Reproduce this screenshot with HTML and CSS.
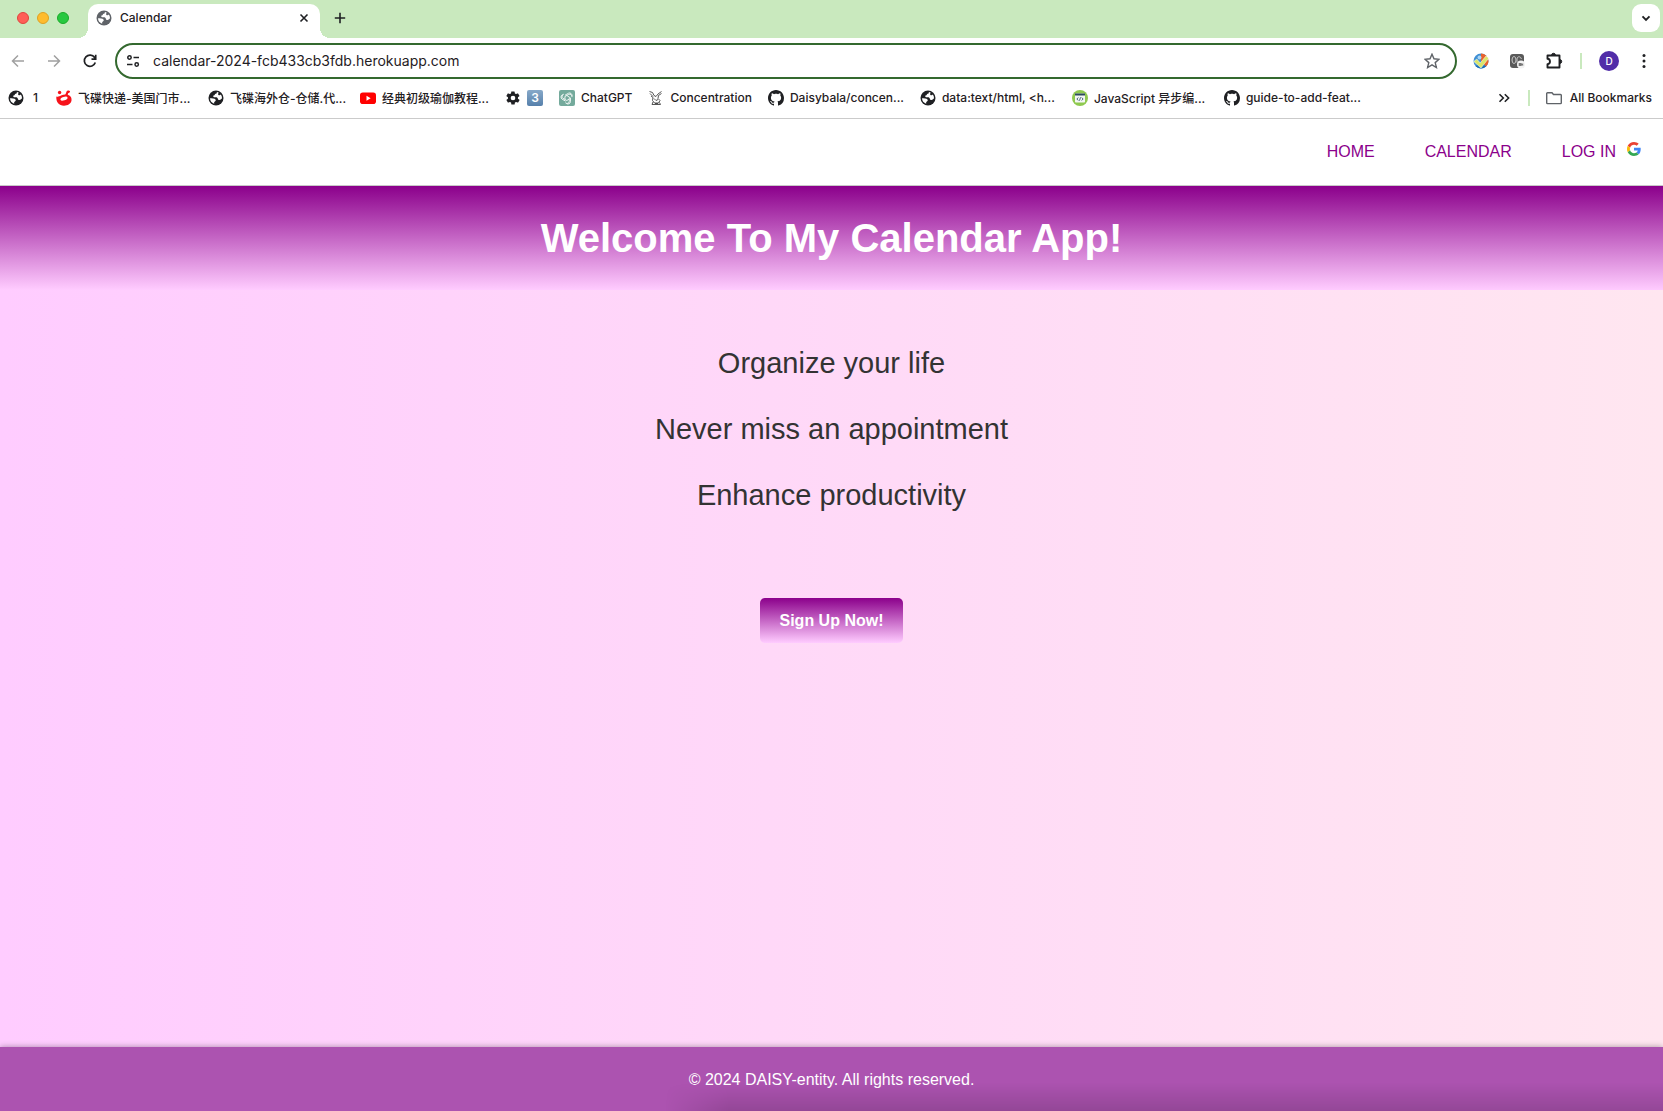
FILE: index.html
```html
<!DOCTYPE html>
<html lang="en">
<head>
<meta charset="utf-8">
<meta name="viewport" content="width=device-width, initial-scale=1">
<title>Calendar</title>
<link rel="stylesheet" href="styles.css">
</head>
<body>
<svg class="sprite" aria-hidden="true">
  <symbol id="globe" viewBox="0 0 16 16">
    <circle cx="8" cy="8" r="7.5" fill="currentColor"/>
    <path d="M8.800 2c.4 1.200-.5 1.900-1.800 2.100-.1 1.100-.8 1.500-1.900 1.700.1 1.100.9 1.600 2.100 1.500 1.700-.1 2.600.3 2.700 1.700.1.900.7 1.200 1.600 1 1.300-.3 1.700-1.300 2.500-1.500a6 6 0 0 0-1.100-4c-.7.600-1.700.9-2.400.4-.8-.7-.3-1.700.3-2.200A6 6 0 0 0 8.800 2z" fill="#fff"/>
    <path d="M2 8.300c1.800.2 4.600.1 5.500 1.300.7 1-.1 1.800-.9 2.200-.5.300-.5.800-.4 1.900A6 6 0 0 1 2 8.300z" fill="#fff"/>
  </symbol>
  <symbol id="github" viewBox="0 0 16 16">
    <path fill="currentColor" d="M8 0C3.580 0 0 3.580 0 8c0 3.540 2.290 6.530 5.470 7.590.4.070.55-.17.55-.38 0-.19-.01-.82-.01-1.490-2.010.37-2.530-.49-2.690-.94-.09-.23-.48-.94-.82-1.130-.28-.15-.68-.52-.01-.53.63-.01 1.080.58 1.230.82.72 1.210 1.870.87 2.330.66.070-.52.28-.87.51-1.070-1.780-.2-3.640-.89-3.640-3.950 0-.87.31-1.590.82-2.150-.08-.2-.36-1.020.080-2.120 0 0 .67-.21 2.200.82.64-.18 1.320-.27 2-.27s1.360.09 2 .27c1.530-1.040 2.200-.82 2.200-.82.44 1.100.16 1.920.08 2.120.51.56.82 1.270.82 2.150 0 3.070-1.870 3.750-3.650 3.950.29.25.54.73.54 1.480 0 1.070-.01 1.930-.01 2.200 0 .21.15.46.55.38A8.010 8.010 0 0 0 16 8c0-4.420-3.580-8-8-8z"/>
  </symbol>
</svg>

<div class="browser">
  <div class="tab-strip">
    <div class="lights"><i class="light light--red"></i><i class="light light--yellow"></i><i class="light light--green"></i></div>
    <div class="tab">
      <svg class="icon icon--muted"><use href="#globe"/></svg>
      <span class="tab-title">Calendar</span>
      <button class="plain" aria-label="Close tab"><svg class="icon" viewBox="0 0 16 16"><path d="M4.500 4.500l7 7m0-7l-7 7" stroke="currentColor" stroke-width="1.600" fill="none"/></svg></button>
    </div>
    <button class="plain" aria-label="New tab"><svg class="icon" viewBox="0 0 16 16"><path d="M8 2.800v10.400M2.800 8h10.400" stroke="currentColor" stroke-width="1.600"/></svg></button>
    <button class="plain tab-search" aria-label="Search tabs"><svg class="icon" viewBox="0 0 16 16"><path d="M4.500 6.300L8 9.800l3.500-3.500" stroke="currentColor" stroke-width="1.900" fill="none"/></svg></button>
  </div>

  <div class="toolbar">
    <div class="history">
      <button class="plain faded" aria-label="Back"><svg class="icon" viewBox="0 0 16 16"><path d="M14 8H3M8 2.500L2.500 8 8 13.500" stroke="currentColor" stroke-width="1.500" fill="none"/></svg></button>
      <button class="plain faded" aria-label="Forward"><svg class="icon" viewBox="0 0 16 16"><path d="M2 8h11M8 2.500L13.500 8 8 13.500" stroke="currentColor" stroke-width="1.500" fill="none"/></svg></button>
      <button class="plain" aria-label="Reload"><svg class="icon" viewBox="0 0 16 16"><path d="M13.300 9.500A5.600 5.600 0 1 1 12.600 4.600l.8 1.200M9.500 6.200h4.200V1.800" stroke="currentColor" stroke-width="1.700" fill="none"/></svg></button>
    </div>
    <div class="address">
      <svg class="icon" viewBox="0 0 16 16"><g fill="none" stroke="currentColor" stroke-width="1.500"><circle cx="4.500" cy="4.500" r="1.700"/><path d="M8.500 4.500H14M2 11.500h5.500"/><circle cx="11.700" cy="11.500" r="1.700"/></g></svg>
      <input class="address-input" type="text" aria-label="Address" value="calendar-2024-fcb433cb3fdb.herokuapp.com">
      <button class="plain grey" aria-label="Bookmark this page"><svg class="icon" viewBox="0 0 16 16"><path d="M8 1.200l2 4.600 5 .5-3.800 3.300 1.200 4.900L8 11.900l-4.400 2.600 1.200-4.900L1 6.300l5-.5z" stroke="currentColor" stroke-width="1.400" fill="none"/></svg></button>
    </div>
    <div class="extensions">
      <div class="extension-list">
        <button class="plain" aria-label="Task checker"><svg class="icon" viewBox="0 0 16 16"><circle cx="8" cy="8" r="7.500" fill="#3f8fd4"/><path d="M8 .5A7.500 7.500 0 0 1 15.500 8c0 2-1 4-2.500 5.500L8 8z" fill="#e8622c"/><path d="M2.500 13A7.500 7.500 0 0 0 13 13.500L8 10z" fill="#1f6fb5"/><circle cx="6.500" cy="4.500" r="2" fill="#a9d5f5"/><path d="M.8 8.500L3.800 6l3.400 4L13 3l2.700 2.300L8 15z" fill="#dbe66a" stroke="#fff" stroke-width=".5"/></svg></button>
        <button class="plain" aria-label="Cookie extension"><svg class="icon" viewBox="0 0 16 16"><rect x="1" y="1" width="14" height="14" rx="3" fill="#5a5a5a"/><ellipse cx="5" cy="7" rx="2" ry="3.500" fill="none" stroke="#c8c8c8"/><path d="M8 9.500V6c0-3 4-3 4.300 0" stroke="#c8c8c8" fill="none"/><circle cx="12" cy="11.500" r="4" fill="#f3f3f3"/><path d="M9.700 10h3v1l1.500-.8v2.800L12.700 12v1h-3z" fill="#777"/></svg></button>
        <button class="plain" aria-label="Extensions"><svg class="icon icon--large" viewBox="0 0 18 18"><path d="M2.500 3.500h12v12h-12v-3.300c3.300-.3 3.300-5.100 0-5.400z" stroke="currentColor" stroke-width="1.900" stroke-linejoin="round" fill="none"/><path d="M6.500 3.500a2 2.200 0 0 1 4 0zM14.500 7.500a2.200 2 0 0 1 0 4z" fill="currentColor" stroke="currentColor"/></svg></button>
      </div>
      <i class="divider"></i>
      <button class="avatar" aria-label="Profile">D</button>
      <button class="plain" aria-label="Menu"><svg class="icon" viewBox="0 0 16 16"><g fill="currentColor"><circle cx="8" cy="2.500" r="1.500"/><circle cx="8" cy="8" r="1.500"/><circle cx="8" cy="13.500" r="1.500"/></g></svg></button>
    </div>
  </div>

  <div class="bookmarks">
    <a class="bookmark bookmark--short" href="#"><svg class="icon"><use href="#globe"/></svg><span>1</span></a>
    <a class="bookmark" href="#"><svg class="icon" viewBox="0 0 16 16"><g fill="#f6131b"><path d="M.3 6.500c2 .5 3-.2 4.700-1 2-.9 3.500-1.200 5.500-1 3.500.3 5.500 3 5 6-.6 3.300-3.500 5.200-7.500 5.200-5 0-8-3.200-7.700-9.200z"/><circle cx="3.600" cy="2.500" r="1.700"/><path d="M9 5.500l1.700-4.200C11.200.2 13.500 0 14 1.300c.3 1.200-.9 1.800-1.900 1.900l-.6 2.600z"/></g><ellipse cx="8" cy="8.700" rx="3.700" ry="1.700" transform="rotate(-18 8 8.700)" fill="#fff"/></svg><span class="long">飞碟快递-美国门市...</span></a>
    <a class="bookmark" href="#"><svg class="icon"><use href="#globe"/></svg><span class="long">飞碟海外仓-仓储.代...</span></a>
    <a class="bookmark" href="#"><svg class="icon" viewBox="0 0 16 16"><rect y="2.500" width="16" height="11.500" rx="2.800" fill="#f00"/><path d="M6.500 5.800v5l4.200-2.500z" fill="#fff"/></svg><span class="medium">经典初级瑜伽教程...</span></a>
    <a class="bookmark" href="#"><svg class="icon" viewBox="0 0 24 24"><path fill="currentColor" d="M19.400 13c0-.3.100-.6.100-1s0-.7-.1-1l2.100-1.600c.2-.2.200-.4.100-.6l-2-3.500c-.1-.2-.4-.3-.6-.2l-2.500 1c-.5-.4-1.100-.7-1.700-1l-.4-2.600a.5.500 0 0 0-.5-.4h-4c-.3 0-.5.200-.5.400L9 5.100c-.6.300-1.200.6-1.700 1l-2.500-1c-.2-.1-.5 0-.6.200l-2 3.500c-.1.200-.1.500.1.600L4.500 11c0 .3-.1.700-.1 1s0 .7.100 1l-2.100 1.600c-.2.200-.2.400-.1.600l2 3.500c.1.200.4.300.6.200l2.500-1c.5.400 1.100.7 1.700 1l.4 2.600c0 .2.200.4.500.4h4c.3 0 .5-.2.500-.4l.4-2.600c.6-.3 1.200-.6 1.700-1l2.500 1c.2.100.5 0 .6-.2l2-3.500c.1-.2.100-.5-.1-.6zM12 15.500a3.500 3.500 0 1 1 0-7 3.500 3.500 0 0 1 0 7z"/></svg><b class="keycap">3</b></a>
    <a class="bookmark" href="#"><svg class="icon" viewBox="0 0 16 16"><rect width="16" height="16" rx="2" fill="#74aa9c"/><g fill="none" stroke="#fff" stroke-width=".8"><path id="petal" d="M8 5.700l2.300 1.200v4.300a2.300 2.300 0 0 1-4 1.500M6 5.200l3.500-2a2.400 2.400 0 0 1 3.400 2.700"/><use href="#petal" transform="rotate(120 8 8)"/><use href="#petal" transform="rotate(240 8 8)"/></g></svg><span>ChatGPT</span></a>
    <a class="bookmark" href="#"><svg class="icon" viewBox="0 0 16 16"><g fill="none" stroke="#444" stroke-width=".9"><path d="M1.500 1.500l3 1 1.500 3 2 1 2-2.500 3.500-2.500M2 3.500l3 3M3 6l2 1.500-.5 3 2 2.500h4l1.500-2.500-2-2 .5-3 3-2M6 8.500l2 2 2-1M5 12l-1 2.500h8.500l-1-2M7 13.500h3"/></g></svg><span>Concentration</span></a>
    <a class="bookmark" href="#"><svg class="icon"><use href="#github"/></svg><span class="long">Daisybala/concen...</span></a>
    <a class="bookmark" href="#"><svg class="icon"><use href="#globe"/></svg><span class="long">data:text/html, &lt;h...</span></a>
    <a class="bookmark" href="#"><svg class="icon" viewBox="0 0 16 16"><circle cx="8" cy="8" r="8" fill="#8fc94f"/><rect x="3" y="3.500" width="10" height="9" rx=".8" fill="#f4f7f4"/><path d="M3 3.500h10v2H3z" fill="#2d4a5c"/><path d="M6.300 7.500L4.900 9l1.400 1.500M9.700 7.500L11.100 9l-1.400 1.500M8.500 7.300l-1 3.400" stroke="#36566b" stroke-width=".9" fill="none"/></svg><span class="long">JavaScript 异步编...</span></a>
    <a class="bookmark" href="#"><svg class="icon"><use href="#github"/></svg><span class="long">guide-to-add-feat...</span></a>
    <div class="bookmarks-end">
      <button class="plain" aria-label="More bookmarks"><svg class="icon" viewBox="0 0 16 16"><path d="M3.500 4.200L7.300 8l-3.800 3.800M8.800 4.200L12.600 8l-3.800 3.800" stroke="currentColor" stroke-width="1.600" fill="none"/></svg></button>
      <i class="divider"></i>
      <a class="bookmark all" href="#"><svg class="icon grey" viewBox="0 0 16 16"><path d="M1.500 2.700H6L7.500 4.500h7a.8.800 0 0 1 .8.800v7.500a.8.800 0 0 1-.8.800h-13a.8.800 0 0 1-.8-.8V3.500a.8.800 0 0 1 .8-.8z" stroke="currentColor" stroke-width="1.400" fill="none"/></svg><span>All Bookmarks</span></a>
    </div>
  </div>
</div>

<nav class="site-nav">
  <a href="#">HOME</a>
  <a href="#">CALENDAR</a>
  <a class="login" href="#">LOG IN
    <svg class="google" viewBox="0 0 48 48"><path fill="#ea4335" d="M24 9.500c3.540 0 6.710 1.220 9.210 3.600l6.850-6.850C35.900 2.380 30.470 0 24 0 14.620 0 6.510 5.380 2.560 13.220l7.980 6.190C12.430 13.720 17.740 9.500 24 9.500z"/><path fill="#4285f4" d="M46.980 24.550c0-1.570-.15-3.090-.38-4.550H24v9.020h12.940c-.58 2.960-2.260 5.480-4.780 7.180l7.730 6c4.510-4.180 7.090-10.360 7.090-17.650z"/><path fill="#fbbc05" d="M10.530 28.590c-.48-1.450-.76-2.990-.76-4.590s.27-3.140.76-4.590l-7.980-6.190C.92 16.460 0 20.120 0 24c0 3.880.92 7.540 2.560 10.780l7.970-6.190z"/><path fill="#34a853" d="M24 48c6.480 0 11.930-2.130 15.890-5.810l-7.730-6c-2.150 1.450-4.920 2.300-8.160 2.300-6.260 0-11.570-4.220-13.470-9.910l-7.980 6.190C6.510 42.620 14.620 48 24 48z"/></svg>
  </a>
</nav>

<header class="banner"><h1>Welcome To My Calendar App!</h1></header>

<main class="hero">
  <p>Organize your life</p>
  <p>Never miss an appointment</p>
  <p>Enhance productivity</p>
  <button class="signup">Sign Up Now!</button>
</main>

<footer class="site-footer">© 2024 DAISY-entity. All rights reserved.</footer>
</body>
</html>
```
FILE: styles.css
```css
* {
  box-sizing: border-box;
}

body {
  display: flex;
  flex-direction: column;
  min-height: 100vh;
  margin: 0;
  font-family: "Liberation Sans", Arial, sans-serif;
  font-size: 16px;
  background: linear-gradient(to right, #ffccff, #ffe6f0);
}

a {
  color: inherit;
  text-decoration: none;
}

.sprite {
  display: none;
}

/* Browser window */
.browser {
  font-family: Inter, "Noto Sans CJK SC", sans-serif;
  font-size: 12px;
  font-weight: 500;
  color: #1f2023;
  background: #fff;
  border-bottom: 1px solid #cbcbcb;
}

.plain {
  display: flex;
  padding: 0;
  border: 0;
  color: inherit;
  background: none;
}

.icon {
  flex: none;
  display: block;
  width: 16px;
  height: 16px;
}

.icon--large {
  width: 18px;
  height: 18px;
}

.icon--muted,
.grey {
  color: #5f6368;
}

.faded {
  color: #a0a0a0;
}

.divider {
  width: 2px;
  height: 16px;
  background: #c9e9be;
}

.tab-strip {
  display: flex;
  align-items: center;
  height: 38px;
  padding: 0 3px 2px 17px;
  background: #c9e9be;
}

.lights {
  display: flex;
  gap: 8px;
  width: 71px;
}

.light {
  width: 12px;
  height: 12px;
  border-radius: 50%;
}

.light--red {
  background: #ff5f57;
  border: 1px solid #e0443e;
}

.light--yellow {
  background: #febc2e;
  border: 1px solid #dea123;
}

.light--green {
  background: #28c840;
  border: 1px solid #1aab29;
}

.tab {
  position: relative;
  display: flex;
  align-items: center;
  gap: 8px;
  width: 232px;
  height: 34px;
  margin: 4px 12px -2px 0;
  padding: 0 8px 6px;
  border-radius: 10px 10px 0 0;
  background: #fff;
}

.tab::before,
.tab::after {
  content: "";
  position: absolute;
  bottom: 0;
  width: 10px;
  height: 10px;
}

.tab::before {
  right: 100%;
  background: radial-gradient(circle at 0 0, transparent 10px, #fff 10px);
}

.tab::after {
  left: 100%;
  background: radial-gradient(circle at 100% 0, transparent 10px, #fff 10px);
}

.tab-title {
  flex: 1;
  padding-bottom: 2px;
}

.tab-search {
  align-items: center;
  justify-content: center;
  width: 28px;
  height: 28px;
  margin-left: auto;
  border-radius: 9px;
  background: #fff;
}

.toolbar {
  display: flex;
  align-items: center;
  height: 46px;
  padding: 0 11px 0 10px;
}

.history {
  display: flex;
  gap: 20px;
  width: 105px;
}

.address {
  flex: 1;
  display: flex;
  align-items: center;
  gap: 12px;
  height: 36px;
  padding: 0 15px 0 8px;
  border: 2px solid #34692f;
  border-radius: 18px;
}

.address-input {
  flex: 1;
  min-width: 0;
  padding: 0 0 2px;
  border: 0;
  outline: 0;
  font: 400 14px Inter, sans-serif;
  color: #1f2023;
  background: none;
}

.extensions {
  display: flex;
  align-items: center;
  gap: 17px;
  margin-left: 16px;
}

.extension-list {
  display: flex;
  align-items: center;
  gap: 20px;
}

.avatar {
  width: 20px;
  height: 20px;
  padding: 0;
  border: 0;
  border-radius: 50%;
  font: 500 10px Inter, sans-serif;
  color: #fff;
  background: #512da8;
}

.bookmarks {
  display: flex;
  align-items: center;
  gap: 16px;
  height: 34px;
  padding: 0 11px 6px 8px;
  white-space: nowrap;
}

.bookmark {
  display: flex;
  align-items: center;
  gap: 6px;
}

.bookmark span {
  padding-bottom: 2px;
}

.bookmark--short {
  gap: 9px;
  margin-right: 2px;
}

.long {
  width: 114px;
}

.medium {
  width: 107px;
}

.keycap {
  width: 16px;
  height: 16px;
  border-radius: 2px;
  font-weight: 600;
  line-height: 16px;
  text-align: center;
  color: #fff;
  background: linear-gradient(#87a9c9, #5680ab);
}

.bookmarks-end {
  display: flex;
  align-items: center;
  gap: 16px;
  margin-left: auto;
}

.all {
  gap: 8px;
}

/* Site */
.site-nav {
  display: flex;
  justify-content: flex-end;
  gap: 50px;
  padding: 23px 22px;
  line-height: 20px;
  color: #8b008b;
  background: #fff;
  border-bottom: 1px solid #c8c8c8;
}

.login {
  display: flex;
  gap: 11px;
}

.google {
  width: 14px;
  height: 14px;
}

.banner {
  padding: 29px 20px;
  text-align: center;
  color: #fff;
  background: linear-gradient(#8b008b, #ffccff);
}

.banner h1 {
  margin: 0;
  font-size: 40px;
  line-height: 46px;
}

.hero {
  flex: 1;
  display: flex;
  flex-direction: column;
  align-items: center;
  gap: 32px;
  padding: 56px 20px;
  font-size: 29px;
  line-height: 34px;
  color: #333;
}

.hero p {
  margin: 0;
}

.signup {
  margin-top: 54px;
  padding: 12px 20px;
  border: 0;
  border-radius: 5px;
  font: bold 16px/21px "Liberation Sans", Arial, sans-serif;
  color: #fff;
  background: linear-gradient(#8b008b, #ffccff);
}

.site-footer {
  position: relative;
  padding: 22px 20px 20px;
  line-height: 22px;
  text-align: center;
  color: #fff;
  background: #ac53b0;
  box-shadow: 0 0 6px rgba(0, 0, 0, 0.35);
}

.site-footer::after {
  content: "";
  position: absolute;
  right: 0;
  bottom: 0;
  left: 40%;
  height: 28px;
  background: linear-gradient(transparent, rgba(0, 0, 0, 0.14));
  mask-image: linear-gradient(to right, transparent, #000 64px);
}
```
